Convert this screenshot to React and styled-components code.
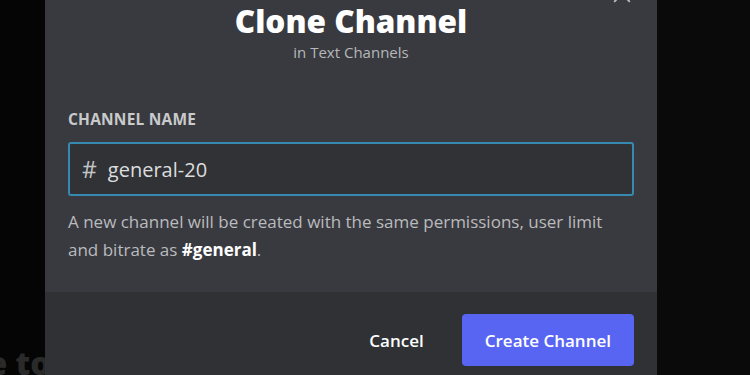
import styled, { createGlobalStyle } from "styled-components";

const Global = createGlobalStyle`
    html, body {
        margin: 0;
        padding: 0;
        background: #060606;
        width: 750px;
        height: 375px;
        overflow: hidden;
        font-family: "Open Sans", "Noto Sans", sans-serif;
    }
    * { box-sizing: border-box; }
`;

const Page = styled.div`
    display: flex;
    width: 750px;
    height: 375px;
    overflow: hidden;
`;

const Side = styled.div`
    width: ${p => p.$width || "auto"};
    flex: ${p => p.$width ? "none" : 1};
    background: ${p => p.$bg};
    display: flex;
    align-items: flex-end;
    overflow: hidden;
`;

const BehindText = styled.div`
    white-space: nowrap;
    margin-left: -34px;
    margin-bottom: -8px;
    font-size: 32px;
    font-weight: 800;
    color: #2a2a2a;
    line-height: 40px;
`;

const Modal = styled.div`
    width: 612px;
    background: #393a3f;
    display: flex;
    flex-direction: column;
`;

const Header = styled.div`
    position: relative;
    text-align: center;
    padding-top: 2px;
`;

const Title = styled.h1`
    margin: 0;
    font-size: 31.5px;
    line-height: 38px;
    font-weight: 800;
    color: #ffffff;
`;

const Subtitle = styled.div`
    margin-top: 4px;
    font-size: 15px;
    line-height: 16px;
    color: #b5b7ba;
`;

const Close = styled.button`
    position: absolute;
    top: -17px;
    right: 24px;
    width: 22px;
    height: 22px;
    padding: 0;
    border: none;
    background: none;
    color: #b9bbbe;
`;

const Body = styled.div`
    padding: 51px 23px 28px;
`;

const Label = styled.div`
    font-size: 15.5px;
    line-height: 16px;
    font-weight: 700;
    color: #c9cacc;
    margin-bottom: 15px;
    letter-spacing: 0.2px;
`;

const Input = styled.div`
    display: flex;
    align-items: center;
    gap: 11px;
    height: 54px;
    padding: 0 12px;
    border: 2px solid #3689b0;
    border-radius: 3px;
    background: #303236;
    color: #dcddde;
    font-size: 20px;
`;

const Hash = styled.span`
    color: #c4c5c7;
    font-size: 23px;
`;

const Description = styled.p`
    margin: 12px 0 0;
    font-size: 17px;
    line-height: 28px;
    color: #b9bbbe;

    strong {
        color: #ffffff;
        font-weight: 700;
    }
`;

const Footer = styled.div`
    flex: 1;
    background: #303135;
    display: flex;
    justify-content: flex-end;
    align-items: flex-start;
    padding: 22px 23px 0;
    gap: 14px;
`;

const Button = styled.button`
    height: 52px;
    padding: 0 ${p => p.$primary ? "23px" : "24px"};
    border: none;
    border-radius: 4px;
    background: ${p => p.$primary ? "#5865f2" : "transparent"};
    color: #ffffff;
    font-family: inherit;
    font-size: 17px;
    font-weight: 600;
`;

export default function App() {
    return (
        <>
            <Global />
            <Page>
                <Side $width="45px" $bg="#050505">
                    <BehindText>ne to</BehindText>
                </Side>
                <Modal>
                    <Header>
                        <Title>Clone Channel</Title>
                        <Subtitle>in Text Channels</Subtitle>
                        <Close aria-label="Close">
                            <svg width="22" height="22" viewBox="0 0 24 24">
                                <path d="M4 4L20 20M20 4L4 20" stroke="currentColor" strokeWidth="2" strokeLinecap="round" />
                            </svg>
                        </Close>
                    </Header>
                    <Body>
                        <Label>CHANNEL NAME</Label>
                        <Input>
                            <Hash>#</Hash>
                            <span>general-20</span>
                        </Input>
                        <Description>
                            A new channel will be created with the same permissions, user limit and bitrate as <strong>#general</strong>.
                        </Description>
                    </Body>
                    <Footer>
                        <Button>Cancel</Button>
                        <Button $primary>Create Channel</Button>
                    </Footer>
                </Modal>
                <Side $bg="#0a0a0a" />
            </Page>
        </>
    );
}
